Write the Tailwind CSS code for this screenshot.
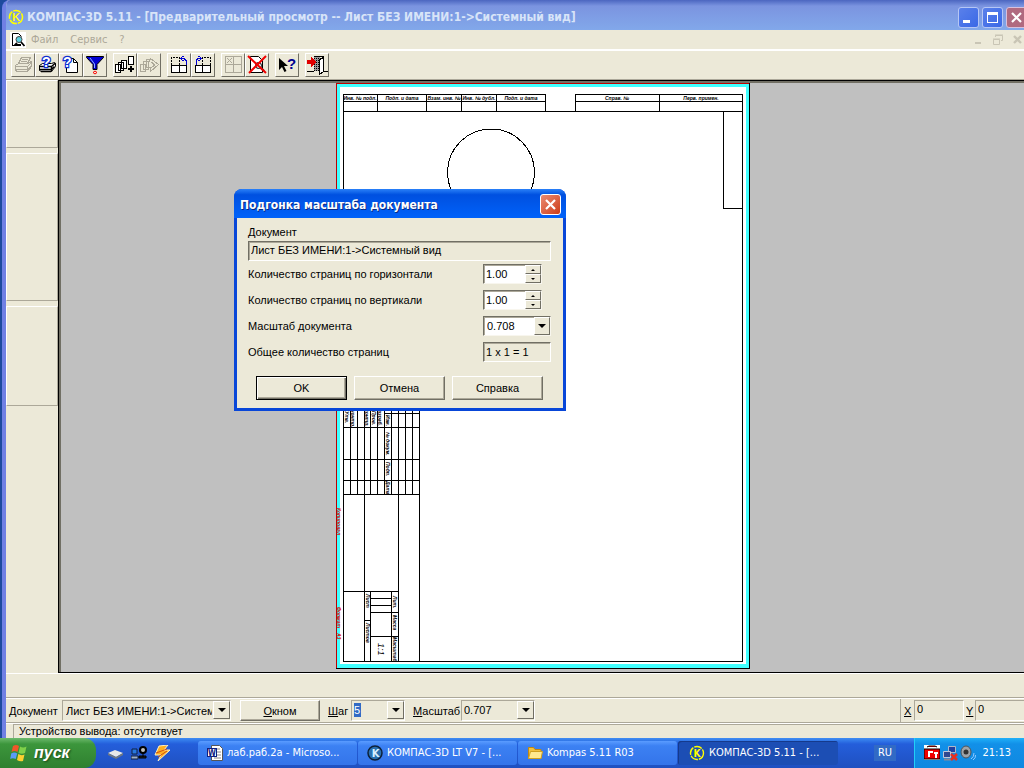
<!DOCTYPE html>
<html lang="ru">

<head>
  <meta charset="UTF-8">
  <meta name="viewport" content="width=device-width, initial-scale=1.0">
  <script src="https://cdn.jsdelivr.net/npm/@tailwindcss/browser@4"></script>
  <title>КОМПАС-3D 5.11</title>
</head>

<body class="h-screen overflow-hidden flex flex-col bg-[#1d4a9e] font-['Liberation_Sans',sans-serif] text-[11px] leading-4 text-black">

  <!-- Окно программы -->
  <div class="flex-1 min-h-0 flex flex-col ml-[2px] border-l-4 border-[#7080e4] bg-[#ece9d8] rounded-tl-lg overflow-hidden">

    <!-- Заголовок -->
    <header class="h-[30px] shrink-0 -ml-1 pl-[6px] flex items-center bg-linear-to-b from-[#4c66c0] via-[#7b94e0] via-20% to-[#82a8ea]">
      <svg class="w-4 h-4 mt-1 shrink-0" viewBox="0 0 16 16">
        <circle cx="8" cy="8" r="6.5" fill="none" stroke="#ffff00" stroke-width="1.6" stroke-dasharray="8 1" />
        <text x="8" y="12" text-anchor="middle" font-size="11" font-weight="bold" fill="#ffff00">K</text>
      </svg>
      <h1 class="ml-[3px] mt-1 flex-1 truncate font-['DejaVu_Sans_Condensed','DejaVu_Sans',sans-serif] font-bold text-[12px] text-[#d8e4f8]">КОМПАС-3D 5.11 - [Предварительный просмотр -- Лист БЕЗ ИМЕНИ:1-&gt;Системный вид]</h1>
      <div class="flex gap-[3px] mt-1 -mr-[3px]">
        <button aria-label="Свернуть" class="w-[21px] h-[21px] rounded-[3px] border border-[#b5c6f5] bg-linear-to-br from-[#5a80ea] to-[#3a68e6] flex items-end pl-1 pb-1"><span class="w-[7px] h-[3px] bg-white"></span></button>
        <button aria-label="Развернуть" class="w-[21px] h-[21px] rounded-[3px] border border-[#b5c6f5] bg-linear-to-br from-[#5a80ea] to-[#3a68e6] flex items-center justify-center"><span class="w-[11px] h-[11px] border border-t-[3px] border-white"></span></button>
        <button aria-label="Закрыть" class="w-[21px] h-[21px] rounded-[3px] border border-[#d8c0dc] bg-[#b06a80] flex items-center justify-center">
          <svg class="w-[13px] h-[13px]" viewBox="0 0 13 13"><path d="M2 2l9 9M11 2l-9 9" stroke="#fff" stroke-width="2.2" /></svg>
        </button>
      </div>
    </header>

    <!-- Меню -->
    <nav class="h-[21px] shrink-0 flex items-center border-b-2 border-white pl-1 font-['DejaVu_Sans_Condensed','DejaVu_Sans',sans-serif] text-[11px] text-[#aca899]">
      <svg class="w-4 h-4 bg-white shrink-0" viewBox="0 0 16 16">
        <path d="M2.5 13.5v-12h6l3 3" fill="none" stroke="#000" />
        <path d="M2 13.500h9" stroke="#000" />
        <circle cx="9" cy="7.5" r="3" fill="#5fd0e0" stroke="#444" />
        <path d="M7 11l-2 2h6M11 10l3.500 4" fill="none" stroke="#000" stroke-width="1.8" />
      </svg>
      <button class="ml-[5px]">Файл</button>
      <button class="ml-3">Сервис</button>
      <button class="ml-3">?</button>
      <div class="ml-auto flex gap-[7px] pr-px">
        <svg class="w-3 h-3" viewBox="0 0 12 12"><path d="M2 9h6" stroke="#c9c5b5" stroke-width="2" /></svg>
        <svg class="w-3 h-3" viewBox="0 0 12 12" fill="none" stroke="#c9c5b5"><path d="M3.5 3V1.5h7v5H9M1.500 5.500h6v5h-6zM1 5h7M3 1h8" /></svg>
        <svg class="w-3 h-3" viewBox="0 0 12 12"><path d="M3 2l7 7M10 2l-7 7" stroke="#c9c5b5" stroke-width="2.4" /></svg>
      </div>
    </nav>

    <!-- Панель инструментов -->
    <div class="h-[29px] shrink-0 flex items-center gap-[6px] pl-[5px] border-b border-[#aca899]">
      <div class="flex">
        <button aria-label="Печать" class="w-6 h-6 border border-t-white border-l-white border-r-[#716f64] border-b-[#716f64]">
          <svg class="w-[22px] h-[22px]" viewBox="0 0 22 22" fill="none" stroke="#aca899" shape-rendering="crispEdges"><path d="M6.500 9.500l3-6h9l-3 6M10 5.500h6M9 7.500h6M3.500 11.500l3-2h9l4-2v5l-4 5h-10l-2-1zM3.500 12.500h12l4-4M3.500 15.500h12l3-3M15.500 12.500v4" /></svg>
        </button>
        <button aria-label="Настройка печати" class="w-6 h-6 border border-t-white border-l-white border-r-[#716f64] border-b-[#716f64]">
          <svg class="w-[22px] h-[22px]" viewBox="0 0 22 22" fill="none" stroke="#000"><path d="M3.500 11.500l3-2h9l3-1 1 1v3l-4 5h-10l-2-1z" fill="#fff" /><path d="M3 12.500h12.500l4-3.500M3 15.500h12.500l3-3M5 17.500h10M15.500 12.500v5" stroke-width="1.500" /><text x="6" y="13" font-size="14" font-family="Liberation Sans" font-weight="bold" fill="#fff" stroke="#1030d0" stroke-width="2.500" paint-order="stroke">?</text></svg>
        </button>
        <button aria-label="Параметры листа" class="w-6 h-6 border border-t-white border-l-white border-r-[#716f64] border-b-[#716f64]">
          <svg class="w-[22px] h-[22px]" viewBox="0 0 22 22" fill="none" stroke="#000"><path d="M6.500 18.500v-14h7l4 4v10z" fill="#fff" /><path d="M13.500 4.500v4h4" /><text x="3" y="13" font-size="14" font-family="Liberation Sans" font-weight="bold" fill="#fff" stroke="#1030d0" stroke-width="2.500" paint-order="stroke">?</text></svg>
        </button>
        <button aria-label="Фильтр" class="w-6 h-6 border border-t-white border-l-white border-r-[#716f64] border-b-[#716f64]">
          <svg class="w-[22px] h-[22px]" viewBox="0 0 22 22"><path d="M2.500 2.500h17v1l-6.500 7v5h-4v-5l-6.500-7z" fill="#0000d0" stroke="#000" /><path d="M6 4l4.500 6v4" fill="none" stroke="#8fb0ff" /><path d="M9 18.500l2-1.500 2 1.500-2 1.500z" fill="none" stroke="#f00" /></svg>
        </button>
      </div>
      <div class="flex">
        <button aria-label="Добавить документ" class="w-6 h-6 border border-t-white border-l-white border-r-[#716f64] border-b-[#716f64]">
          <svg class="w-[22px] h-[22px]" viewBox="0 0 22 22" fill="#fff" stroke="#000" shape-rendering="crispEdges"><path d="M7.500 6.500h5v8h-5zM4.500 8.500h5v8h-5zM1.500 10.500h5v8h-5z" /><path d="M14.500 2.500h5v8h-5z" /><path d="M17 12v6M14 15h6" stroke-width="2" /></svg>
        </button>
        <button aria-label="Разместить" class="w-6 h-6 border border-t-white border-l-white border-r-[#716f64] border-b-[#716f64]">
          <svg class="w-[22px] h-[22px]" viewBox="0 0 22 22" fill="#ece9d8" stroke="#aca899" shape-rendering="crispEdges"><path d="M8.500 5.500h5v8h-5zM5.500 7.500h5v8h-5zM2.500 10.500h5v7h-5z" /><path d="M10.500 9.500l2-5 8 6-8 7v-4h-2z" /><path d="M13 8l4 3-4 3" /></svg>
        </button>
      </div>
      <div class="flex">
        <button aria-label="Повернуть против часовой стрелки" class="w-6 h-6 border border-t-white border-l-white border-r-[#716f64] border-b-[#716f64]">
          <svg class="w-[22px] h-[22px]" viewBox="0 0 22 22" fill="none" stroke="#000" shape-rendering="crispEdges"><path d="M3.500 11.500h15v7h-15zM11.500 11.500v7" fill="#fff" /><path d="M3.500 11V3.500h8V11" stroke-dasharray="2 1" /><path d="M13 4.500h3l2 2v4M15.500 2l-3 2.500 3 2.500" stroke="#0000d0" /></svg>
        </button>
        <button aria-label="Повернуть по часовой стрелке" class="w-6 h-6 border border-t-white border-l-white border-r-[#716f64] border-b-[#716f64]">
          <svg class="w-[22px] h-[22px]" viewBox="0 0 22 22" fill="none" stroke="#000" shape-rendering="crispEdges"><path d="M3.500 11.500h15v7h-15zM10.500 11.500v7" fill="#fff" /><path d="M10.500 11V3.500h8V11" stroke-dasharray="2 1" /><path d="M9 4.500H6l-2 2v4M6.500 2l3 2.500-3 2.500" stroke="#0000d0" /></svg>
        </button>
      </div>
      <div class="flex">
        <button aria-label="Выбор листов" class="w-6 h-6 border border-t-white border-l-white border-r-[#716f64] border-b-[#716f64]">
          <svg class="w-[22px] h-[22px]" viewBox="0 0 22 22" fill="none" stroke="#aca899" shape-rendering="crispEdges"><path d="M3.500 2.500h16v16h-16zM11.500 2.500v16M3.500 10.500h16M5 4l5 5M10 4l-5 5" /></svg>
        </button>
        <button aria-label="Закрыть просмотр" class="w-6 h-6 border border-t-white border-l-white border-r-[#716f64] border-b-[#716f64]">
          <svg class="w-[22px] h-[22px]" viewBox="0 0 22 22" fill="none" stroke="#000"><path d="M4.500 18.500v-16h8l4 4v12z" fill="#fff" /><circle cx="12.500" cy="11.500" r="3" fill="#e0f0f0" /><path d="M15 14l3 3" stroke-width="2" /><path d="M2 2l18 17M20 2L3 19" stroke="#f00000" stroke-width="2" /></svg>
        </button>
      </div>
      <button aria-label="Справка по объекту" class="w-6 h-6 border border-t-white border-l-white border-r-[#716f64] border-b-[#716f64]">
        <svg class="w-[22px] h-[22px]" viewBox="0 0 22 22"><path d="M3 4v12l3-3 2.500 5 2-1-2.500-5h4z" fill="#000" /><text x="11" y="15" font-size="15" font-weight="bold" font-family="Liberation Sans" fill="#000090">?</text></svg>
      </button>
      <button aria-label="Выход" class="w-6 h-6 border border-t-white border-l-white border-r-[#716f64] border-b-[#716f64]">
        <svg class="w-[22px] h-[22px]" viewBox="0 0 22 22" shape-rendering="crispEdges"><path d="M7.500 2.500h10v15h4M1 17.500h7" fill="none" stroke="#000" /><path d="M8 3h6v14H8z" fill="#999" /><path d="M8 4h6M8 6h6M8 8h6M8 10h6M8 12h6M8 14h6M8 16h6" stroke="#000" stroke-dasharray="1 1" /><path d="M13.500 5.500l4-2v14l-4 3z" fill="#fff" stroke="#000" /><path d="M1 6h4V3l5 5-5 5v-3H1z" fill="#e00000" /></svg>
      </button>
    </div>

    <!-- Рабочая область -->
    <main class="flex-1 min-h-0 flex">
      <aside class="w-[52px] shrink-0 flex flex-col gap-[5px]">
        <div class="h-[68px] border border-t-white border-l-white border-r-[#aca899] border-b-[#aca899]"></div>
        <div class="h-[148px] border border-t-white border-l-white border-r-[#aca899] border-b-[#aca899]"></div>
        <div class="h-[100px] border border-t-white border-l-white border-r-[#aca899] border-b-[#aca899]"></div>
      </aside>
      <div class="flex-1 border border-r-0 border-black">
        <div class="h-full border-l-2 border-t-2 border-[#716f64] bg-[#c0c0c0] flex justify-center overflow-hidden">
          <!-- Лист чертежа -->
          <svg class="w-[414px] h-[586px] shrink-0" viewBox="336 83 414 586" fill="none" stroke="#000" shape-rendering="crispEdges" font-family="Liberation Sans" font-style="italic" font-weight="bold" font-size="5">
            <rect x="336" y="83" width="414" height="586" fill="#000" stroke="none" />
            <rect x="336" y="83" width="413" height="585" fill="#c00000" stroke="none" />
            <rect x="337" y="84" width="412" height="584" fill="#40ffff" stroke="none" />
            <rect x="340" y="87" width="406" height="577" fill="#fff" stroke="none" />
            <path d="M343.500 661.500V94.500H545.500V111M343.500 101.500h202M377.500 94v17M426.500 94v17M461.500 94v17M496.500 94v17M343 111.500h400M575.500 111V94.500h167V661.500H343M575 101.500h168M659.500 94v17M723.500 111v97.500h19" />
            <circle cx="491" cy="172.500" r="43.500" />
            <path d="M350.500 400v94M357.500 400v94M364.500 400v261M370.500 400v94M377.500 400v94M384.500 400v94M391.500 400v94M398.500 400v261M405.500 400v94M412.500 400v94M419.500 400v261" />
            <path d="M384 413.500h35M343 427.500h76M343 459.500h76M343 480.500h76M343 494.500h76M343 591.500h55M370.500 591v70M391.500 591v70M370 598.500h21M370 605.500h21M370 612.500h28M370 636.500h28M364 620.500h6" />
            <g fill="#000" stroke="none" text-anchor="middle">
              <text x="360" y="100">Инв. № подл.</text>
              <text x="402" y="100">Подп. и дата</text>
              <text x="444" y="100">Взам. инв. №</text>
              <text x="479" y="100">Инв. № дубл.</text>
              <text x="521" y="100">Подп. и дата</text>
              <text x="617" y="100">Справ. №</text>
              <text x="701" y="100">Перв. примен.</text>
            </g>
            <g fill="#000" stroke="none">
              <text transform="translate(345 411) rotate(90)">Утв.</text>
              <text transform="translate(351 405) rotate(90)">Н.контр.</text>
              <text transform="translate(365 405) rotate(90)">Т.контр.</text>
              <text transform="translate(372 411) rotate(90)">Пров.</text>
              <text transform="translate(378 407) rotate(90)">Разраб.</text>
              <text transform="translate(386 415) rotate(90)">Изм.</text>
              <text transform="translate(386 432) rotate(90)">№ докум.</text>
              <text transform="translate(386 462) rotate(90)">Подп.</text>
              <text transform="translate(386 481) rotate(90)">Дата</text>
              <text transform="translate(366 594) rotate(90)">Лист</text>
              <text transform="translate(366 623) rotate(90)">Листов</text>
              <text transform="translate(393 596) rotate(90)">Лит.</text>
              <text transform="translate(393 615) rotate(90)">Масса</text>
              <text transform="translate(393 637) rotate(90)">Масштаб</text>
              <text transform="translate(378 643) rotate(90)" font-size="9" font-weight="normal">1:1</text>
            </g>
            <g fill="#e00000" stroke="none">
              <text transform="translate(337 508) rotate(90)">Копировал</text>
              <text transform="translate(337 607) rotate(90)">Формат</text>
              <text transform="translate(337 633) rotate(90)">А3</text>
            </g>
          </svg>
        </div>
      </div>
    </main>

    <div class="h-[25px] shrink-0 border-t border-white border-b border-b-[#aca899]"></div>

    <!-- Строка параметров -->
    <div class="h-[25px] shrink-0 flex items-center border-t border-white border-b border-b-[#aca899] pl-[3px]">
      <label for="doc" class="w-[53px]"><u>Д</u>окумент</label>
      <div class="relative w-[169px] h-[21px] border border-t-[#aca899] border-l-[#aca899] border-r-white border-b-white">
        <select id="doc" class="appearance-none w-full h-full pl-[3px] pr-[18px] outline-none overflow-hidden whitespace-nowrap">
          <option>Лист БЕЗ ИМЕНИ:1-&gt;Системный вид</option>
        </select>
        <span class="absolute right-0 top-0 w-[17px] h-[18px] bg-[#ece9d8] border border-t-white border-l-white border-r-[#716f64] border-b-[#716f64] flex items-center justify-center pointer-events-none"><span class="border-x-4 border-x-transparent border-t-4 border-t-black"></span></span>
      </div>
      <button class="ml-[9px] w-20 h-[21px] border border-t-white border-l-white border-r-[#716f64] border-b-[#716f64] shadow-[inset_-1px_-1px_#aca899]"><u>О</u>кном</button>
      <label for="step" class="ml-2 w-[23px]"><u>Ш</u>аг</label>
      <div class="relative w-[54px] h-[21px] border border-t-[#aca899] border-l-[#aca899] border-r-white border-b-white">
        <input id="step" value="5" class="w-[7px] h-[14px] ml-[2px] mt-[2px] bg-[#316ac5] text-white outline-none block">
        <button aria-label="Список шагов" class="absolute right-0 top-0 w-[17px] h-[18px] border border-t-white border-l-white border-r-[#716f64] border-b-[#716f64] flex items-center justify-center"><span class="border-x-4 border-x-transparent border-t-4 border-t-black"></span></button>
      </div>
      <label for="zoom" class="ml-2 w-12"><u>М</u>асштаб</label>
      <div class="relative w-[74px] h-[21px] border border-t-[#aca899] border-l-[#aca899] border-r-white border-b-white">
        <input id="zoom" value="0.707" class="w-[50px] h-[18px] pl-[2px] outline-none block">
        <button aria-label="Список масштабов" class="absolute right-0 top-0 w-[17px] h-[18px] border border-t-white border-l-white border-r-[#716f64] border-b-[#716f64] flex items-center justify-center"><span class="border-x-4 border-x-transparent border-t-4 border-t-black"></span></button>
      </div>
      <div class="ml-auto flex items-center self-stretch border-l border-[#aca899] pl-[3px]">
        <label for="cx" class="w-[10px]"><u>X</u></label>
        <input id="cx" value="0" class="w-[50px] h-[21px] pl-[2px] pb-[3px] border border-t-[#aca899] border-l-[#aca899] border-r-white border-b-white outline-none">
        <label for="cy" class="ml-[2px] w-[9px]"><u>Y</u></label>
        <input id="cy" value="0" class="w-[49px] h-[21px] pl-[2px] pb-[3px] border border-r-0 border-t-[#aca899] border-l-[#aca899] border-b-white outline-none">
      </div>
    </div>

    <!-- Строка состояния -->
    <footer class="h-[15px] shrink-0 border-t border-white pl-[7px]">
      <p class="border-t border-l border-[#aca899] pl-[5px] leading-[13px]">Устройство вывода: отсутствует</p>
    </footer>
  </div>

  <!-- Диалог -->
  <div role="dialog" aria-labelledby="dlg" class="absolute left-[234px] top-[189px] w-[332px] rounded-t-lg bg-[#0846d8] p-[3px] pt-0">
    <div class="h-[29px] -mx-[3px] pr-[5px] pl-[6px] flex items-center justify-between rounded-t-lg bg-linear-to-b from-[#2a80f8] via-[#0050e0] via-20% to-[#0062fa]">
      <h2 id="dlg" class="mt-[3px] font-['DejaVu_Sans_Condensed','DejaVu_Sans',sans-serif] font-bold text-[12px] text-white [text-shadow:1px_1px_#0a2a80]">Подгонка масштаба документа</h2>
      <button aria-label="Закрыть" class="w-[21px] h-[21px] mt-[2px] rounded-[3px] border border-white bg-linear-to-br from-[#ea8a70] to-[#cc3a10] flex items-center justify-center">
        <svg class="w-[13px] h-[13px]" viewBox="0 0 13 13"><path d="M2 2l9 9M11 2l-9 9" stroke="#fff" stroke-width="2.2" /></svg>
      </button>
    </div>
    <form class="bg-[#ece9d8] pl-[11px] pr-3 pt-[6px] pb-2">
      <label for="d-name" class="block">Документ</label>
      <input id="d-name" readonly value="Лист БЕЗ ИМЕНИ:1-&gt;Системный вид" class="block mt-px w-full h-5 pl-[2px] pb-[2px] border border-t-[#716f64] border-l-[#716f64] border-r-white border-b-white shadow-[inset_1px_1px_#aca899] outline-none">
      <div class="h-[26px] flex items-center justify-between">
        <label for="d-h">Количество страниц по горизонтали</label>
        <div class="flex w-[59px] h-5 mr-[9px] bg-white border border-t-[#716f64] border-l-[#716f64] border-r-[#f8f6ee] border-b-[#f8f6ee]">
          <input id="d-h" value="1.00" class="w-[41px] pl-[2px] outline-none shadow-[inset_1px_1px_#aca899]">
          <div class="flex flex-col w-4">
            <button type="button" aria-label="Больше" class="flex-1 bg-[#ece9d8] border border-t-white border-l-white border-r-[#716f64] border-b-[#716f64] flex items-center justify-center"><span class="border-x-2 border-x-transparent border-b-2 border-b-black"></span></button>
            <button type="button" aria-label="Меньше" class="flex-1 bg-[#ece9d8] border border-t-white border-l-white border-r-[#716f64] border-b-[#716f64] flex items-center justify-center"><span class="border-x-2 border-x-transparent border-t-2 border-t-black"></span></button>
          </div>
        </div>
      </div>
      <div class="h-[26px] flex items-center justify-between">
        <label for="d-v">Количество страниц по вертикали</label>
        <div class="flex w-[59px] h-5 mr-[9px] bg-white border border-t-[#716f64] border-l-[#716f64] border-r-[#f8f6ee] border-b-[#f8f6ee]">
          <input id="d-v" value="1.00" class="w-[41px] pl-[2px] outline-none shadow-[inset_1px_1px_#aca899]">
          <div class="flex flex-col w-4">
            <button type="button" aria-label="Больше" class="flex-1 bg-[#ece9d8] border border-t-white border-l-white border-r-[#716f64] border-b-[#716f64] flex items-center justify-center"><span class="border-x-2 border-x-transparent border-b-2 border-b-black"></span></button>
            <button type="button" aria-label="Меньше" class="flex-1 bg-[#ece9d8] border border-t-white border-l-white border-r-[#716f64] border-b-[#716f64] flex items-center justify-center"><span class="border-x-2 border-x-transparent border-t-2 border-t-black"></span></button>
          </div>
        </div>
      </div>
      <div class="h-[26px] flex items-center justify-between">
        <label for="d-s">Масштаб документа</label>
        <div class="relative w-[68px] h-5 bg-white border border-t-[#716f64] border-l-[#716f64] border-r-[#f8f6ee] border-b-[#f8f6ee]">
          <select id="d-s" class="appearance-none w-full h-full pl-[3px] outline-none shadow-[inset_1px_1px_#aca899]">
            <option>0.708</option>
          </select>
          <span class="absolute right-0 top-0 w-4 h-[18px] bg-[#ece9d8] border border-t-white border-l-white border-r-[#716f64] border-b-[#716f64] flex items-center justify-center pointer-events-none"><span class="border-x-4 border-x-transparent border-t-4 border-t-black"></span></span>
        </div>
      </div>
      <div class="h-[26px] flex items-center justify-between">
        <label for="d-t">Общее количество страниц</label>
        <input id="d-t" readonly value="1 x 1 = 1" class="w-[68px] h-5 pl-[2px] border border-t-[#716f64] border-l-[#716f64] border-r-white border-b-white shadow-[inset_1px_1px_#aca899] outline-none">
      </div>
      <div class="mt-[11px] pl-2 flex gap-[7px]">
        <button type="button" class="w-[91px] h-6 border border-black shadow-[inset_1px_1px_#fff,inset_-1px_-1px_#716f64,inset_-2px_-2px_#aca899]">OK</button>
        <button type="button" class="w-[91px] h-6 border border-t-white border-l-white border-r-[#716f64] border-b-[#716f64] shadow-[inset_-1px_-1px_#aca899]">Отмена</button>
        <button type="button" class="w-[91px] h-6 border border-t-white border-l-white border-r-[#716f64] border-b-[#716f64] shadow-[inset_-1px_-1px_#aca899]">Справка</button>
      </div>
    </form>
  </div>

  <!-- Панель задач -->
  <div class="h-[30px] shrink-0 flex items-stretch bg-linear-to-b from-[#3f8cf3] via-[#245edb] via-20% to-[#1f50c0] text-white font-['DejaVu_Sans_Condensed','DejaVu_Sans',sans-serif] text-[11px]">
    <button class="w-24 shrink-0 flex items-center gap-[6px] pl-[10px] rounded-r-xl bg-linear-to-b from-[#6cba6c] via-[#3c963c] via-20% to-[#2f8030] font-['Liberation_Sans',sans-serif] font-bold italic text-[16px] [text-shadow:1px_1px_2px_#1a4a1a]">
      <svg class="w-[18px] h-[18px] shrink-0" viewBox="0 0 18 18"><path d="M3 2q3-2 6 0L7.500 8q-3-2-6 0z" fill="#f0562a" /><path d="M10 2.500q3 2 6.500 0L15 9q-3 1.500-6.500 0z" fill="#7fd04a" /><path d="M1.200 9.500q3-2 6 0L5.700 15q-3-1.500-5.500 0z" fill="#5b9bf8" /><path d="M8.300 10q3 2 6.200 .5L13 17q-3 1-6-1z" fill="#fcd030" /></svg>
      пуск
    </button>
    <div class="w-[102px] shrink-0 flex items-center gap-[7px] pl-3">
      <svg class="w-4 h-4" viewBox="0 0 16 16"><path d="M0 8l7-3 8 3-7 4z" fill="#e8e8e8" /><path d="M0 8l8 4v2L0 10zM8 12l7-4v2l-7 4z" fill="#707880" /></svg>
      <svg class="w-4 h-4" viewBox="0 0 16 16"><path d="M1 4h5v5H1z" fill="#2878e0" stroke="#102040" /><path d="M0 11h7v3H0z" fill="#9fb0c8" stroke="#102040" /><circle cx="12" cy="5" r="3" fill="#c0c0c0" stroke="#000" stroke-width="2" /><path d="M12 8v4M8 11h7v2H8z" fill="#222" stroke="#000" /></svg>
      <svg class="w-4 h-4" viewBox="0 0 16 16"><path d="M5 1l9-1-4 5h6L4 16l3-6H1z" fill="#ffb020" stroke="#fff0c0" /><path d="M2 8l11-4M4 12l9-6" stroke="#d05010" /></svg>
    </div>
    <button class="w-[159px] mr-px my-[3px] min-w-0 flex items-center gap-1 pl-[9px] rounded-[3px] bg-linear-to-b from-[#5a9cff] via-[#3c81f3] via-20% to-[#3474ea]">
      <svg class="w-4 h-4 shrink-0" viewBox="0 0 16 16"><path d="M4.500 .5h8l3 3v12h-11z" fill="#fff" stroke="#555" /><path d="M7 4h6M10 7h4M10 10h4M7 13h7" stroke="#888" /><rect x=".5" y="3.500" width="9" height="8" fill="#fff" stroke="#102080" /><text x="5" y="10.500" text-anchor="middle" font-size="8" font-weight="bold" fill="#102080">W</text></svg>
      <span class="truncate">лаб.раб.2а - Microso...</span>
    </button>
    <button class="w-[159px] mr-px my-[3px] min-w-0 flex items-center gap-1 pl-[9px] rounded-[3px] bg-linear-to-b from-[#5a9cff] via-[#3c81f3] via-20% to-[#3474ea]">
      <svg class="w-4 h-4 shrink-0" viewBox="0 0 16 16"><circle cx="8" cy="8" r="7" fill="#2a70b0" stroke="#0c2038" stroke-width="1.500" /><text x="8.500" y="12" text-anchor="middle" font-size="11" font-weight="bold" fill="#d8f0ff">K</text></svg>
      <span class="truncate">КОМПАС-3D LT V7 - [...</span>
    </button>
    <button class="w-[159px] mr-px my-[3px] min-w-0 flex items-center gap-1 pl-[9px] rounded-[3px] bg-linear-to-b from-[#5a9cff] via-[#3c81f3] via-20% to-[#3474ea]">
      <svg class="w-4 h-4 shrink-0" viewBox="0 0 16 16"><path d="M1.500 13.500v-11h5l1.500 2h6v9z" fill="#f0c040" stroke="#c08810" /><path d="M1.500 13.500l2-7h12l-1.500 7z" fill="#ffe890" stroke="#d0a020" /></svg>
      <span class="truncate">Kompas 5.11 R03</span>
    </button>
    <button class="w-40 my-[3px] min-w-0 flex items-center gap-1 pl-[11px] rounded-[3px] bg-[#1c4eb4] shadow-[inset_1px_1px_#153a8c]">
      <svg class="w-4 h-4 shrink-0" viewBox="0 0 16 16"><circle cx="8" cy="8" r="6.500" fill="none" stroke="#ffff00" stroke-width="1.400" stroke-dasharray="8 1" /><text x="8" y="12" text-anchor="middle" font-size="10" font-weight="bold" fill="#ffff00">K</text></svg>
      <span class="truncate">КОМПАС-3D 5.11 - [...</span>
    </button>
    <div class="ml-auto flex items-center pr-[18px]"><span class="bg-[#316ac5] px-1">RU</span></div>
    <div class="w-[110px] shrink-0 flex items-center gap-[2px] pl-[9px] border-l border-[#20d0f8] bg-linear-to-b from-[#20b0f8] via-[#1290e8] via-20% to-[#0f88e0]">
      <svg class="w-4 h-4" viewBox="0 0 16 16"><path d="M0 0h16v15H0z" fill="#fff" /><path d="M3 2l2-1h6l2 1M0 4h16v10H0z" fill="#f00000" stroke="#000" /><path d="M4 6h5v2H6v4H4zM10 7h4v2h-1v4h-2V9h-1z" fill="#fff" /></svg>
      <svg class="w-4 h-4" viewBox="0 0 16 16"><path d="M6.500 1.500h7v6h-7z" fill="#2040a0" stroke="#b0b8c8" /><path d="M1.500 6.500h7v6h-7z" fill="#304890" stroke="#c0c8d8" /><path d="M2 14.500h7" stroke="#889" stroke-width="2" /><path d="M9 9l6 6M15 9l-6 6" stroke="#e83020" stroke-width="2.500" /></svg>
      <svg class="w-4 h-4" viewBox="0 0 16 16"><ellipse cx="6" cy="7" rx="5" ry="6" fill="#a0a4a8" stroke="#505458" /><circle cx="6" cy="7" r="2.500" fill="#333" /><path d="M11 14q3-2 3-6M13 15q3-2 2.500-5" fill="none" stroke="#90c8ff" /></svg>
      <time class="ml-auto mr-[13px]">21:13</time>
    </div>
  </div>

</body>

</html>
